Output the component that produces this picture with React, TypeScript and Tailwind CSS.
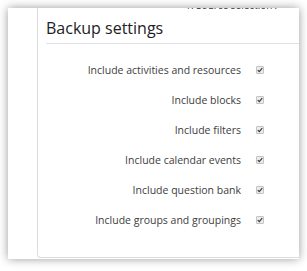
import React from 'react'

const settings = [
  'Include activities and resources',
  'Include blocks',
  'Include filters',
  'Include calendar events',
  'Include question bank',
  'Include groups and groupings',
]

const TinyCheck = () => (
  <span className="flex h-[8px] w-[8px] items-center justify-center rounded-[1px] border border-[#c4c4c4] bg-[#ececec]">
    <svg viewBox="0 0 8 8" className="h-[6px] w-[6px]">
      <path d="M1 4.2 L3 6.2 L7 1.5" fill="none" stroke="#3a3a3a" strokeWidth="1.6" />
    </svg>
  </span>
)

export default function App() {
  return (
    <div className="h-[271px] w-[307px] bg-white pl-2 pt-2 font-['Open_Sans',sans-serif]">
      <div className="flex h-[251px] w-[291px] overflow-hidden bg-white shadow-[0_0_9px_rgba(0,0,0,0.4)]">
        <div className="w-[29px] shrink-0" />
        <div className="flex h-[250px] min-w-0 flex-1 flex-col rounded-bl-[4px] border-b border-l border-[#dcdcdc]">
          {/* clipped breadcrumb */}
          <div className="flex h-[3px] items-end justify-end gap-[8px] overflow-hidden pr-[1px] text-[10px] leading-[12px] text-[#333]">
            <span>1. Source selection ▸</span>
            <span>—</span>
          </div>
          <div className="ml-[8px] mt-[5px] border-b border-[#dee2e6] pb-[3px]">
            <h2 className="text-[16px] leading-[24px] text-[#1d2125]">Backup settings</h2>
          </div>
          <div className="mt-[11px] flex flex-col">
            {settings.map((label) => (
              <div key={label} className="flex h-[30px] items-center">
                <span className="w-[203px] text-right text-[10.5px] leading-[16px] text-[#3d3d3d]">{label}</span>
                <span className="ml-[15px]">
                  <TinyCheck />
                </span>
              </div>
            ))}
          </div>
        </div>
      </div>
    </div>
  )
}
